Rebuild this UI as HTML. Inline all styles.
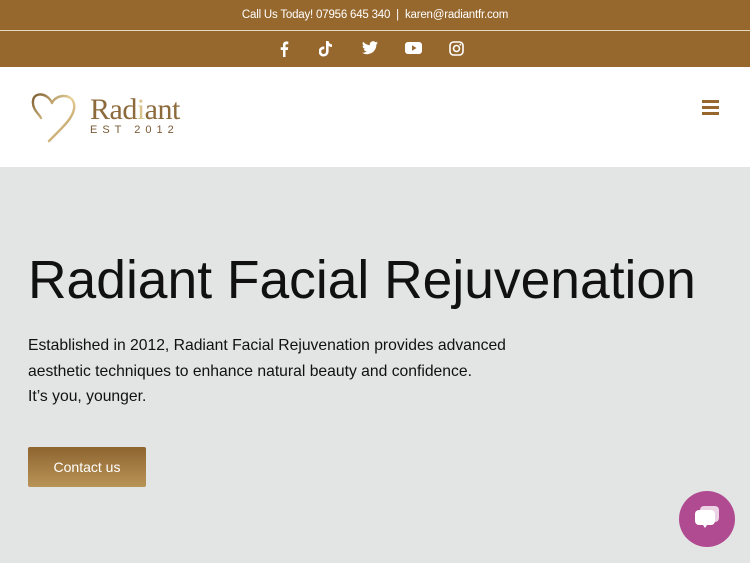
<!DOCTYPE html>
<html><head><meta charset="utf-8"><style>
*{margin:0;padding:0;box-sizing:border-box}
body{width:750px;height:563px;overflow:hidden;font-family:"Liberation Sans",sans-serif;background:#e3e4e4;position:relative}
.top{position:absolute;left:0;top:0;width:750px;height:30px;background:#97682e;color:#fff;font-size:11.5px;text-align:center;line-height:30px;letter-spacing:-0.2px}
.line{position:absolute;left:0;top:30px;width:750px;height:1px;background:#e8d8c0}
.soc{position:absolute;left:0;top:31px;width:750px;height:36px;background:#97682e}
.soc svg{position:absolute;top:10px}
.hdr{position:absolute;left:0;top:67px;width:750px;height:100px;background:#fff}
h1{position:absolute;left:28px;top:250px;font-size:53.4px;font-weight:normal;color:#111;letter-spacing:0;white-space:nowrap}
p{position:absolute;left:28px;top:333px;font-size:15.7px;line-height:25.5px;color:#111}
.btn{position:absolute;left:28px;top:447px;width:118px;height:40px;background:linear-gradient(#8e642f,#b99457);color:#fff;font-size:14px;text-align:center;line-height:40px;border-radius:2px}
.chat{position:absolute;left:679px;top:491px;width:56px;height:56px;border-radius:50%;background:#b04b92}
</style></head><body>
<div class="top">Call Us Today! 07956 645 340 &nbsp;|&nbsp; karen@radiantfr.com</div>
<div class="line"></div>
<div class="soc">
<svg style="left:279px" width="10" height="16" viewBox="0 0 10 16"><path d="M6.5 16V9h2.3l.4-2.8H6.5V4.5c0-.8.3-1.3 1.4-1.3h1.4V.7C9 .6 8.2.5 7.3.5 5.300.5 4 1.700 4 3.900V6.200H1.700V9H4v7z" fill="#fff"/></svg>
<svg style="left:319px" width="14" height="16" viewBox="0 0 14 16"><path d="M7 0h2.600c.2 2 1.500 3.300 3.400 3.400v2.600C11.600 6 10.500 5.600 9.600 5v5.500A5 5 0 1 1 5.300 5.600v2.700a2.400 2.400 0 1 0 1.700 2.300z" fill="#fff"/></svg>
<svg style="left:362px" width="16" height="14" viewBox="0 0 16 14"><path d="M16 1.700a6.500 6.500 0 0 1-1.900.5A3.300 3.300 0 0 0 15.600.400a6.600 6.600 0 0 1-2.100.8A3.300 3.300 0 0 0 7.900 4.200 9.300 9.300 0 0 1 1.100.8a3.300 3.300 0 0 0 1 4.400 3.200 3.200 0 0 1-1.500-.4 3.300 3.300 0 0 0 2.600 3.200 3.300 3.300 0 0 1-1.500.1 3.300 3.300 0 0 0 3.100 2.300A6.600 6.600 0 0 1 0 11.700 9.300 9.300 0 0 0 5 13.200c6 0 9.400-5 9.400-9.400v-.4A6.700 6.700 0 0 0 16 1.700z" fill="#fff"/></svg>
<svg style="left:405px" width="17" height="14" viewBox="0 0 17 14"><rect x="0" y="1" width="17" height="12" rx="3" fill="#fff"/><path d="M7 4.200v5.600L11.500 7z" fill="#97682e"/></svg>
<svg style="left:449px" width="15" height="15" viewBox="0 0 15 15"><rect x="1" y="1" width="13" height="13" rx="3.500" fill="none" stroke="#fff" stroke-width="1.600"/><circle cx="7.500" cy="7.500" r="3" fill="none" stroke="#fff" stroke-width="1.600"/><circle cx="11.300" cy="3.700" r=".9" fill="#fff"/></svg>
</div>
<div class="hdr">
<svg style="position:absolute;left:30px;top:24px" width="50" height="52" viewBox="0 0 50 52"><defs><linearGradient id="g" x1="0" y1="0" x2="1" y2="1"><stop offset="0" stop-color="#7a5a2e"/><stop offset=".5" stop-color="#e8d39a"/><stop offset="1" stop-color="#a8834a"/></linearGradient></defs><path d="M22 12C18 2 4 0 3 10c-1 8 6 13 8 17M22 12c4-9 20-10 22 1 2 10-8 20-18 30-3 3-5 5-7 7" fill="none" stroke="url(#g)" stroke-width="2.400" stroke-linecap="round"/></svg>
<div style="position:absolute;left:90px;top:26px;font-family:'Liberation Serif',serif;font-size:30px;color:#8c6a3c;letter-spacing:-0.5px">Rad<span style="color:#d9c48b">i</span>ant</div>
<div style="position:absolute;left:90px;top:57px;font-size:11px;color:#7a5a35;letter-spacing:5px">EST 2012</div>
<div style="position:absolute;left:702px;top:33px;width:17px"><div style="height:3px;background:#97682e;margin-bottom:3px"></div><div style="height:3px;background:#97682e;margin-bottom:3px"></div><div style="height:3px;background:#97682e"></div></div>
</div>
<h1>Radiant Facial Rejuvenation</h1>
<p>Established in 2012, Radiant Facial Rejuvenation provides advanced<br>aesthetic techniques to enhance natural beauty and confidence.<br>It’s you, younger.</p>
<div class="btn">Contact us</div>
<div class="chat"><svg style="position:absolute;left:14px;top:15px" width="28" height="26" viewBox="0 0 28 26"><rect x="7" y="0" width="19" height="16" rx="4" fill="#fff" opacity=".75"/><rect x="2" y="4" width="20" height="15" rx="4" fill="#fff"/><path d="M10 19l2 3 2-3z" fill="#fff"/></svg></div>
</body></html>
